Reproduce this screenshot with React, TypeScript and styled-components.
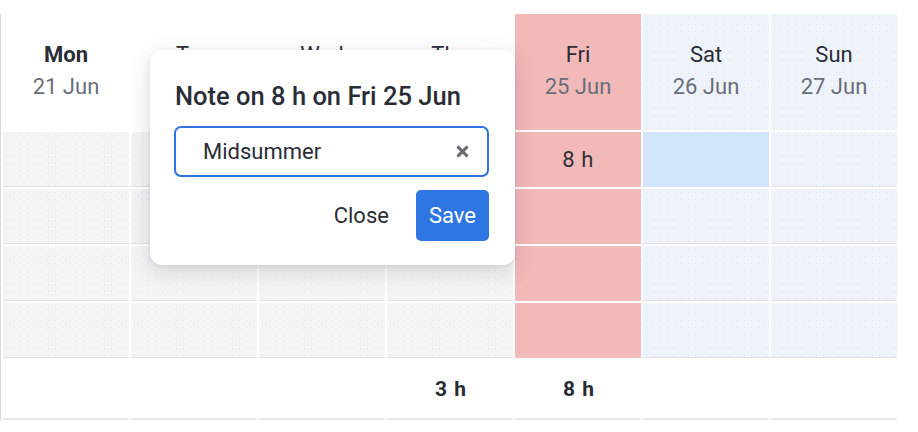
import React, { useState } from 'react';
import styled, { createGlobalStyle, css } from 'styled-components';
import { FaTimes } from 'react-icons/fa';

const GlobalStyle = createGlobalStyle`
    html, body {
        margin: 0;
        padding: 0;
        background: #ffffff;
    }
    body {
        font-family: Roboto, "Liberation Sans", Arial, sans-serif;
        color: #2b2d36;
    }
`;

type Kind = 'weekday' | 'weekend' | 'holiday';

const Page = styled.div`
    position: relative;
    width: 918px;
    height: 432px;
    padding-top: 14px;
    box-sizing: border-box;
`;

const Grid = styled.div`
    display: grid;
    grid-template-columns: repeat(7, 126px);
    grid-template-rows: 116px repeat(4, 55px) 60px;
    column-gap: 2px;
    row-gap: 2px;
    width: 896px;
    padding-left: 2px;
    box-sizing: border-box;
    border-left: 1px solid #d3d9e6;
`;

const dots = (color: string) => css`
    background-image: radial-gradient(${color} 0.6px, transparent 0.9px);
    background-size: 7px 7px;
`;

const cellBg = (kind: Kind) => {
    if (kind === 'holiday') return css`background-color: #f2b9b9;`;
    if (kind === 'weekend') return css`
        background-color: #eef3f9;
        ${dots('#d6e3f5')}
    `;
    return css`
        background-color: #f3f4f6;
        ${dots('#e3e5ea')}
    `;
};

const HeaderCell = styled.div<{ kind: Kind }>`
    display: flex;
    flex-direction: column;
    align-items: center;
    justify-content: center;
    gap: 6px;
    padding-bottom: 3px;
    font-size: 22px;
    ${p => (p.kind === 'weekday' ? css`background: #ffffff;` : cellBg(p.kind))}
`;

const DayName = styled.span<{ today?: boolean }>`
    font-weight: ${p => (p.today ? 700 : 400)};
    color: #2b2d36;
    line-height: 26px;
`;

const DayDate = styled.span`
    color: #6b6e7a;
    line-height: 26px;
`;

const Cell = styled.div<{ kind: Kind; selected?: boolean }>`
    display: flex;
    align-items: center;
    justify-content: center;
    font-size: 22px;
    letter-spacing: 0.6px;
    color: #2f3038;
    box-shadow: inset 0 -1px 0 ${p => (p.kind === 'holiday' ? '#f2b9b9' : '#dfe1e7')};
    ${p => cellBg(p.kind)}
    ${p => p.selected && css`
        background: #d1e4fa;
        box-shadow: none;
    `}
`;

const TotalCell = styled.div`
    display: flex;
    align-items: center;
    justify-content: center;
    padding: 0 0 3px 2px;
    font-size: 21px;
    font-weight: 700;
    letter-spacing: 1px;
    color: #2a2b34;
    box-shadow: inset 0 -2px 0 #e7e8ec;
`;

const Popover = styled.div`
    position: absolute;
    left: 150px;
    top: 50px;
    width: 365px;
    box-sizing: border-box;
    padding: 32px 26px 24px 24px;
    background: #ffffff;
    border-radius: 12px;
    box-shadow: 0 6px 22px rgba(40, 44, 60, 0.16), 0 1px 4px rgba(40, 44, 60, 0.08);
`;

const Title = styled.h3`
    margin: 0 0 16px 1px;
    font-size: 25.5px;
    font-weight: 500;
    line-height: 28px;
    color: #2b2d36;
    white-space: nowrap;
`;

const InputWrap = styled.div`
    display: flex;
    align-items: center;
    height: 51px;
    box-sizing: border-box;
    border: 2px solid #2d74e0;
    border-radius: 7px;
    padding: 0 16px 0 27px;
`;

const NoteInput = styled.input`
    flex: 1;
    min-width: 0;
    border: none;
    outline: none;
    background: transparent;
    font-family: inherit;
    font-size: 22px;
    color: #2b2d36;
    padding: 0;
    caret-color: #2b2d36;
`;

const ClearButton = styled.button`
    display: flex;
    align-items: center;
    border: none;
    background: none;
    padding: 0;
    color: #6a6c73;
    cursor: pointer;
`;

const Actions = styled.div`
    display: flex;
    justify-content: flex-end;
    align-items: center;
    margin-top: 13px;
`;

const Button = styled.button<{ primary?: boolean }>`
    height: 51px;
    padding: 0 ${p => (p.primary ? 13 : 27)}px 0 ${p => (p.primary ? 13 : 12)}px;
    border: none;
    border-radius: 5px;
    font-family: inherit;
    font-size: 22px;
    cursor: pointer;
    background: ${p => (p.primary ? '#2e76e2' : 'transparent')};
    color: ${p => (p.primary ? '#ffffff' : '#2b2d36')};
`;

const days: { name: string; date: string; kind: Kind; today?: boolean }[] = [
    { name: 'Mon', date: '21 Jun', kind: 'weekday', today: true },
    { name: 'Tue', date: '22 Jun', kind: 'weekday' },
    { name: 'Wed', date: '23 Jun', kind: 'weekday' },
    { name: 'Thu', date: '24 Jun', kind: 'weekday' },
    { name: 'Fri', date: '25 Jun', kind: 'holiday' },
    { name: 'Sat', date: '26 Jun', kind: 'weekend' },
    { name: 'Sun', date: '27 Jun', kind: 'weekend' },
];

const rows: string[][] = [
    ['', '', '', '', '8 h', '', ''],
    ['', '', '', '', '', '', ''],
    ['', '', '', '', '', '', ''],
    ['', '', '', '', '', '', ''],
];

const totals = ['', '', '', '3 h', '8 h', '', ''];

const App: React.FC = () => {
    const [note, setNote] = useState('Midsummer');

    return (
        <Page>
            <GlobalStyle />
            <Grid>
                {days.map(d => (
                    <HeaderCell key={d.name} kind={d.kind}>
                        <DayName today={d.today}>{d.name}</DayName>
                        <DayDate>{d.date}</DayDate>
                    </HeaderCell>
                ))}
                {rows.map((row, r) =>
                    row.map((value, c) => (
                        <Cell key={`${r}-${c}`} kind={days[c].kind} selected={r === 0 && c === 5}>
                            {value}
                        </Cell>
                    ))
                )}
                {totals.map((t, i) => (
                    <TotalCell key={i}>{t}</TotalCell>
                ))}
            </Grid>

            <Popover>
                <Title>Note on 8 h on Fri 25 Jun</Title>
                <InputWrap>
                    <NoteInput value={note} onChange={e => setNote(e.target.value)} autoFocus />
                    <ClearButton onClick={() => setNote('')}>
                        <FaTimes size={17} />
                    </ClearButton>
                </InputWrap>
                <Actions>
                    <Button>Close</Button>
                    <Button primary>Save</Button>
                </Actions>
            </Popover>
        </Page>
    );
};

export default App;
